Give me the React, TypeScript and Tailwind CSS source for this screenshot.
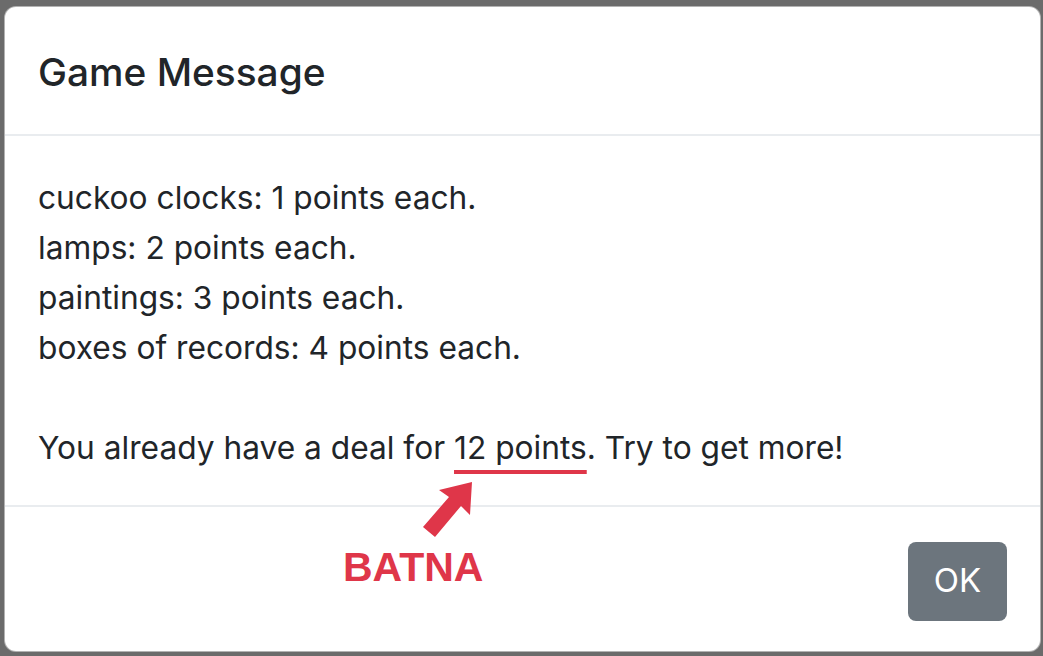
import React from "react";

const items = [
  "cuckoo clocks: 1 points each.",
  "lamps: 2 points each.",
  "paintings: 3 points each.",
  "boxes of records: 4 points each.",
];

function Arrow() {
  return (
    <svg
      className="absolute left-[418px] top-[476px]"
      width="62"
      height="66"
      viewBox="0 0 62 66"
    >
      <polygon
        points="54,6 52,39 43,30 17,61 5,51 31,21 21,14"
        fill="#df3649"
      />
    </svg>
  );
}

export default function App() {
  return (
    <div
      className="relative h-[656px] w-[1043px] overflow-hidden bg-[#6b6b6b] pl-[4px] pt-[6px]"
      style={{ fontFamily: "Inter, 'Liberation Sans', sans-serif" }}
    >
      <div className="flex h-[646px] w-[1037px] flex-col rounded-[12px] border border-black/30 bg-white text-[#212529]">
        {/* Header */}
        <div className="flex h-[129px] items-center border-b-2 border-[#e9ecef] px-[33px]">
          <h5 className="pt-[2px] text-[38.8px] font-medium leading-[60px]">Game Message</h5>
        </div>

        {/* Body */}
        <div className="px-[33px] pb-[32px] pt-[37px] text-[31.7px] leading-[50px]">
          {items.map((t) => (
            <div key={t}>{t}</div>
          ))}
          <div className="h-[50px]" />
          <div>
            You already have a deal for{" "}
            <span className="underline decoration-[#df3649] decoration-[4px] underline-offset-[11px]">
              12 points
            </span>
            . Try to get more!
          </div>
        </div>

        {/* Footer */}
        <div className="flex flex-1 items-center justify-end border-t-2 border-[#e9ecef] pl-[33px] pr-[33px] pt-[4px]">
          <button className="h-[79px] w-[99px] rounded-[8px] bg-[#6c757d] text-[33px] text-white">
            OK
          </button>
        </div>
      </div>

      <Arrow />
      <div
        className="absolute left-[343px] top-[542px] text-[41px] font-bold leading-[50px] text-[#df3649]"
        style={{ fontFamily: "'Liberation Sans', Arial, sans-serif" }}
      >
        BATNA
      </div>
    </div>
  );
}
